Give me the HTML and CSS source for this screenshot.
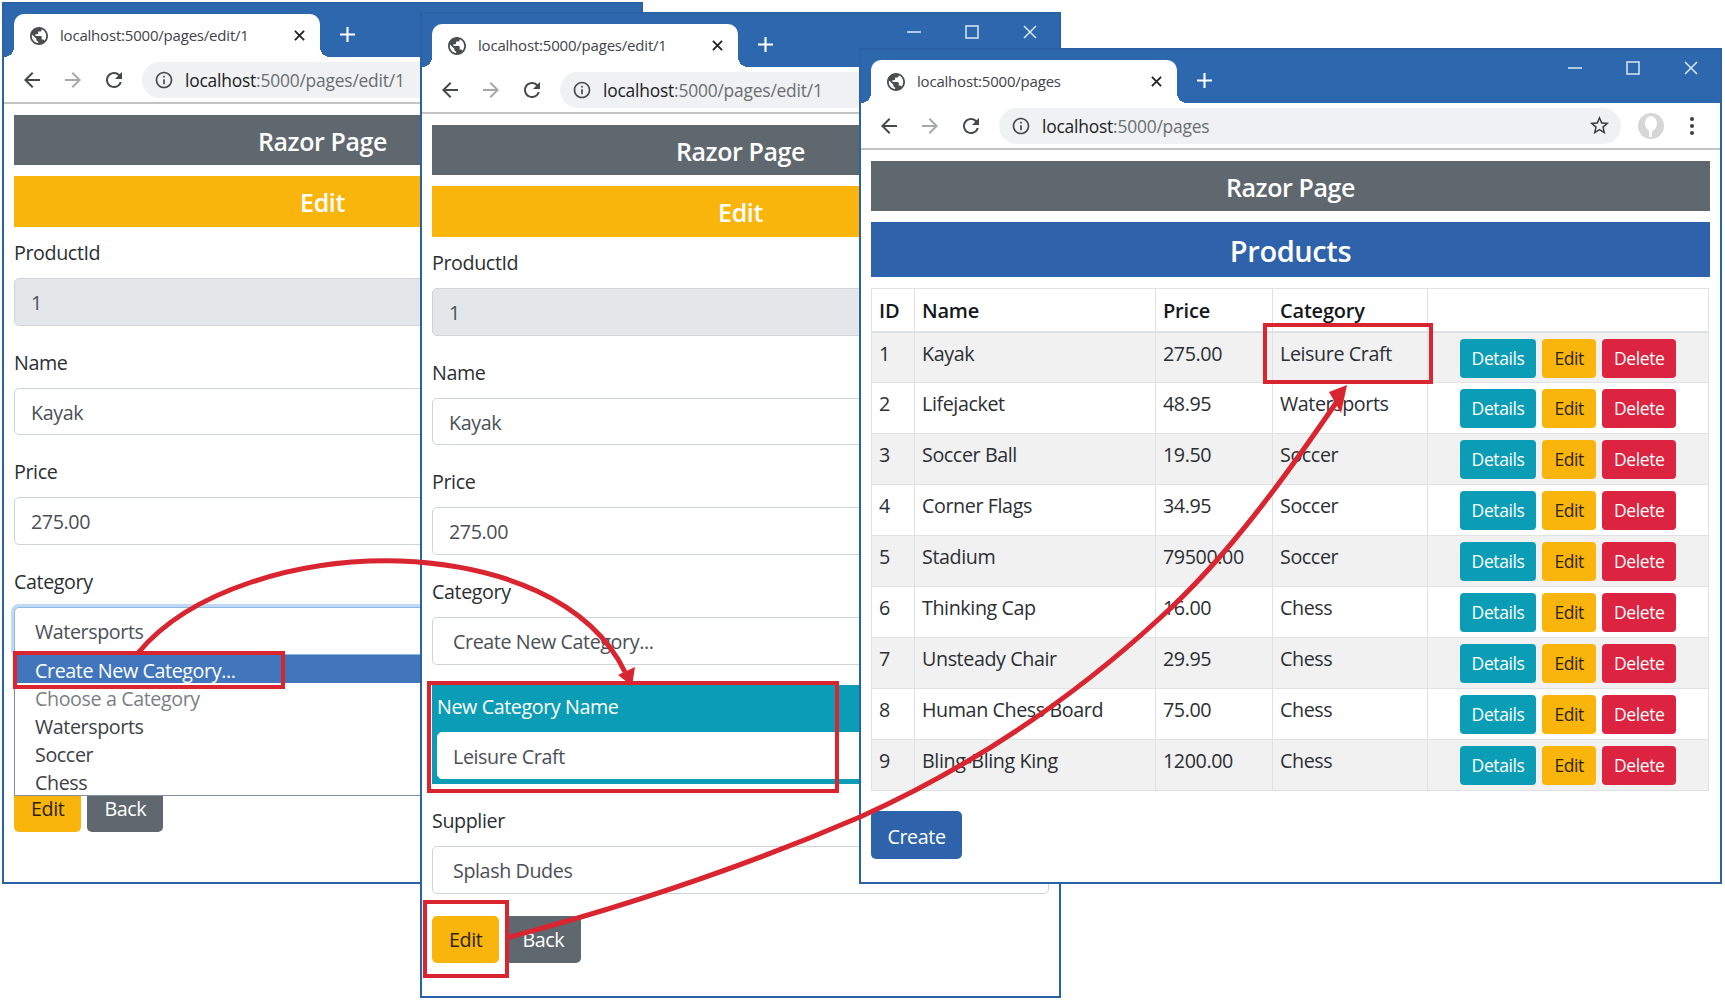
FILE: index.html
```html
<!DOCTYPE html>
<html lang="en">

<head>
    <meta charset="UTF-8">
    <title>Razor Page</title>
    <link rel="stylesheet" href="styles.css">
</head>

<body>

    <svg class="icon-defs" width="0" height="0">
        <symbol id="i-globe" viewBox="2 2 20 20"><path d="M12 2C6.48 2 2 6.48 2 12s4.48 10 10 10 10-4.48 10-10S17.52 2 12 2zm-1 17.93c-3.95-.49-7-3.85-7-7.93 0-.62.08-1.21.21-1.79L9 15v1c0 1.1.9 2 2 2v1.93zm6.9-2.54c-.26-.81-1-1.39-1.9-1.39h-1v-3c0-.55-.45-1-1-1H8v-2h2c.55 0 1-.45 1-1V7h2c1.1 0 2-.9 2-2v-.41c2.93 1.19 5 4.06 5 7.41 0 2.08-.8 3.97-2.1 5.39z"/></symbol>
        <symbol id="i-back" viewBox="0 0 24 24"><path d="M20 11H7.83l5.59-5.59L12 4l-8 8 8 8 1.41-1.41L7.83 13H20v-2z"/></symbol>
        <symbol id="i-forward" viewBox="0 0 24 24"><path d="M12 4l-1.41 1.41L16.17 11H4v2h12.17l-5.58 5.59L12 20l8-8z"/></symbol>
        <symbol id="i-reload" viewBox="0 0 24 24"><path d="M17.65 6.35A7.958 7.958 0 0 0 12 4c-4.42 0-7.99 3.58-7.99 8s3.57 8 7.99 8c3.73 0 6.84-2.55 7.73-6h-2.08A5.99 5.99 0 0 1 12 18c-3.31 0-6-2.69-6-6s2.69-6 6-6c1.66 0 3.14.69 4.22 1.78L13 11h7V4l-2.35 2.35z"/></symbol>
        <symbol id="i-info" viewBox="0 0 24 24"><path d="M11 7h2v2h-2zm0 4h2v6h-2zm1-9C6.48 2 2 6.48 2 12s4.48 10 10 10 10-4.48 10-10S17.52 2 12 2zm0 18c-4.41 0-8-3.59-8-8s3.59-8 8-8 8 3.59 8 8-3.59 8-8 8z"/></symbol>
        <symbol id="i-star" viewBox="0 0 24 24"><path d="M22 9.24l-7.19-.62L12 2 9.19 8.63 2 9.24l5.46 4.73L5.82 21 12 17.27 18.18 21l-1.63-7.03L22 9.24zM12 15.4l-3.76 2.27 1-4.28-3.32-2.88 4.38-.38L12 6.1l1.71 4.04 4.38.38-3.32 2.88 1 4.28L12 15.4z"/></symbol>
        <symbol id="i-close" viewBox="0 0 12 12"><path d="M1 1l10 10M11 1L1 11" fill="none" stroke="currentColor" stroke-width="2"/></symbol>
        <symbol id="i-plus" viewBox="0 0 14 14"><path d="M7 0v14M0 7h14" fill="none" stroke="currentColor" stroke-width="2"/></symbol>
        <symbol id="i-min" viewBox="0 0 14 14"><path d="M0 7h14" fill="none" stroke="currentColor" stroke-width="1.5"/></symbol>
        <symbol id="i-max" viewBox="0 0 14 14"><rect x="1" y="1" width="12" height="12" fill="none" stroke="currentColor" stroke-width="1.5"/></symbol>
        <symbol id="i-x" viewBox="0 0 14 14"><path d="M1 1l12 12M13 1L1 13" fill="none" stroke="currentColor" stroke-width="1.5"/></symbol>
    </svg>

    <!-- first window: edit form with the category list open -->
    <div class="window window-one">
        <div class="tabstrip">
            <div class="tab">
                <svg class="tab-globe"><use href="#i-globe"/></svg>
                <span class="tab-title">localhost:5000/pages/edit/1</span>
                <svg class="tab-close"><use href="#i-close"/></svg>
            </div>
            <svg class="new-tab"><use href="#i-plus"/></svg>
        </div>
        <div class="toolbar">
            <svg class="nav-icon"><use href="#i-back"/></svg>
            <svg class="nav-icon muted"><use href="#i-forward"/></svg>
            <svg class="nav-icon"><use href="#i-reload"/></svg>
            <div class="address">
                <svg class="info-icon"><use href="#i-info"/></svg>
                <span class="host">localhost</span><span class="path">:5000/pages/edit/1</span>
            </div>
        </div>
        <div class="content">
            <h4 class="bar bar-dark">Razor Page</h4>
            <h4 class="bar bar-warning">Edit</h4>
            <div class="group">
                <label>ProductId</label>
                <div class="field field-readonly">1</div>
            </div>
            <div class="group">
                <label>Name</label>
                <div class="field">Kayak</div>
            </div>
            <div class="group">
                <label>Price</label>
                <div class="field">275.00</div>
            </div>
            <div class="group group-last">
                <label>Category</label>
                <div class="select-wrap">
                    <div class="field field-select field-focus">Watersports</div>
                    <ul class="menu">
                        <li class="menu-active">Create New Category...</li>
                        <li class="menu-muted">Choose a Category</li>
                        <li>Watersports</li>
                        <li>Soccer</li>
                        <li>Chess</li>
                    </ul>
                </div>
            </div>
            <div class="actions actions-under-menu">
                <button class="btn btn-warning">Edit</button>
                <button class="btn btn-secondary">Back</button>
            </div>
        </div>
    </div>

    <!-- second window: new category section showing -->
    <div class="window window-two">
        <div class="tabstrip">
            <div class="tab">
                <svg class="tab-globe"><use href="#i-globe"/></svg>
                <span class="tab-title">localhost:5000/pages/edit/1</span>
                <svg class="tab-close"><use href="#i-close"/></svg>
            </div>
            <svg class="new-tab"><use href="#i-plus"/></svg>
            <div class="win-controls">
                <span><svg><use href="#i-min"/></svg></span>
                <span><svg><use href="#i-max"/></svg></span>
                <span><svg><use href="#i-x"/></svg></span>
            </div>
        </div>
        <div class="toolbar">
            <svg class="nav-icon"><use href="#i-back"/></svg>
            <svg class="nav-icon muted"><use href="#i-forward"/></svg>
            <svg class="nav-icon"><use href="#i-reload"/></svg>
            <div class="address">
                <svg class="info-icon"><use href="#i-info"/></svg>
                <span class="host">localhost</span><span class="path">:5000/pages/edit/1</span>
            </div>
        </div>
        <div class="content">
            <h4 class="bar bar-dark">Razor Page</h4>
            <h4 class="bar bar-warning">Edit</h4>
            <div class="group">
                <label>ProductId</label>
                <div class="field field-readonly">1</div>
            </div>
            <div class="group">
                <label>Name</label>
                <div class="field">Kayak</div>
            </div>
            <div class="group">
                <label>Price</label>
                <div class="field">275.00</div>
            </div>
            <div class="group group-tight">
                <label>Category</label>
                <div class="field field-select">Create New Category...</div>
            </div>
            <div class="new-category">
                <label>New Category Name</label>
                <div class="field field-inset">Leisure Craft</div>
            </div>
            <div class="group">
                <label>Supplier</label>
                <div class="field field-select">Splash Dudes</div>
            </div>
            <div class="actions">
                <button class="btn btn-warning">Edit</button>
                <button class="btn btn-secondary">Back</button>
            </div>
        </div>
    </div>

    <!-- third window: product list -->
    <div class="window window-three">
        <div class="tabstrip">
            <div class="tab">
                <svg class="tab-globe"><use href="#i-globe"/></svg>
                <span class="tab-title">localhost:5000/pages</span>
                <svg class="tab-close"><use href="#i-close"/></svg>
            </div>
            <svg class="new-tab"><use href="#i-plus"/></svg>
            <div class="win-controls">
                <span><svg><use href="#i-min"/></svg></span>
                <span><svg><use href="#i-max"/></svg></span>
                <span><svg><use href="#i-x"/></svg></span>
            </div>
        </div>
        <div class="toolbar">
            <svg class="nav-icon"><use href="#i-back"/></svg>
            <svg class="nav-icon muted"><use href="#i-forward"/></svg>
            <svg class="nav-icon"><use href="#i-reload"/></svg>
            <div class="address address-short">
                <svg class="info-icon"><use href="#i-info"/></svg>
                <span class="host">localhost</span><span class="path">:5000/pages</span>
                <svg class="star-icon"><use href="#i-star"/></svg>
            </div>
            <svg class="avatar" viewBox="0 0 26 26">
                <circle cx="13" cy="13" r="13" fill="#d6d6d6"/>
                <ellipse cx="13" cy="10.5" rx="6" ry="7.5" fill="#fff"/>
                <path d="M11 16h3v8h-3z" fill="#fff"/>
            </svg>
            <div class="kebab"><i></i><i></i><i></i></div>
        </div>
        <div class="content">
            <h4 class="bar bar-dark">Razor Page</h4>
            <h3 class="bar bar-primary">Products</h3>
            <table class="products">
                <colgroup>
                    <col class="col-id"><col class="col-name"><col class="col-price"><col class="col-cat"><col>
                </colgroup>
                <thead>
                    <tr><th>ID</th><th>Name</th><th>Price</th><th>Category</th><th></th></tr>
                </thead>
                <tbody>
                    <tr><td>1</td><td>Kayak</td><td>275.00</td><td>Leisure Craft</td><td class="row-actions"><div><a class="btn-sm btn-info">Details</a><a class="btn-sm btn-warning">Edit</a><a class="btn-sm btn-danger">Delete</a></div></td></tr>
                    <tr><td>2</td><td>Lifejacket</td><td>48.95</td><td>Watersports</td><td class="row-actions"><div><a class="btn-sm btn-info">Details</a><a class="btn-sm btn-warning">Edit</a><a class="btn-sm btn-danger">Delete</a></div></td></tr>
                    <tr><td>3</td><td>Soccer Ball</td><td>19.50</td><td>Soccer</td><td class="row-actions"><div><a class="btn-sm btn-info">Details</a><a class="btn-sm btn-warning">Edit</a><a class="btn-sm btn-danger">Delete</a></div></td></tr>
                    <tr><td>4</td><td>Corner Flags</td><td>34.95</td><td>Soccer</td><td class="row-actions"><div><a class="btn-sm btn-info">Details</a><a class="btn-sm btn-warning">Edit</a><a class="btn-sm btn-danger">Delete</a></div></td></tr>
                    <tr><td>5</td><td>Stadium</td><td>79500.00</td><td>Soccer</td><td class="row-actions"><div><a class="btn-sm btn-info">Details</a><a class="btn-sm btn-warning">Edit</a><a class="btn-sm btn-danger">Delete</a></div></td></tr>
                    <tr><td>6</td><td>Thinking Cap</td><td>16.00</td><td>Chess</td><td class="row-actions"><div><a class="btn-sm btn-info">Details</a><a class="btn-sm btn-warning">Edit</a><a class="btn-sm btn-danger">Delete</a></div></td></tr>
                    <tr><td>7</td><td>Unsteady Chair</td><td>29.95</td><td>Chess</td><td class="row-actions"><div><a class="btn-sm btn-info">Details</a><a class="btn-sm btn-warning">Edit</a><a class="btn-sm btn-danger">Delete</a></div></td></tr>
                    <tr><td>8</td><td>Human Chess Board</td><td>75.00</td><td>Chess</td><td class="row-actions"><div><a class="btn-sm btn-info">Details</a><a class="btn-sm btn-warning">Edit</a><a class="btn-sm btn-danger">Delete</a></div></td></tr>
                    <tr><td>9</td><td>Bling-Bling King</td><td>1200.00</td><td>Chess</td><td class="row-actions"><div><a class="btn-sm btn-info">Details</a><a class="btn-sm btn-warning">Edit</a><a class="btn-sm btn-danger">Delete</a></div></td></tr>
                </tbody>
            </table>
            <button class="btn btn-primary btn-create">Create</button>
        </div>
    </div>

    <!-- red callouts and arrows over the windows -->
    <svg class="annotations" viewBox="0 0 1725 1001">
        <rect x="15" y="653" width="268" height="34"/>
        <rect x="429" y="683" width="408" height="108"/>
        <rect x="425" y="902" width="82" height="74"/>
        <rect x="1265" y="325" width="166" height="57"/>
        <path d="M138 653C190 590 300 558 400 561C500 565 590 600 625 672"/>
        <polygon points="618,675 635,667 632,686"/>
        <path d="M506 938C650 900 760 860 860 817C960 772 1060 710 1160 618C1230 555 1290 470 1338 400"/>
        <polygon points="1329,392 1347,385 1341,413"/>
    </svg>

</body>
</html>
```

FILE: styles.css
```css
* {
    padding: 0;
    margin: 0;
    box-sizing: border-box;
    list-style: none;
}

html,
body {
    width: 1725px;
    height: 1001px;
    overflow: hidden;
    background-color: #fff;
}

body {
    position: relative;
    font-family: "Open Sans", "Noto Sans", sans-serif;
    font-size: 19.7px;
    letter-spacing: -0.4px;
    line-height: 30px;
    color: #2b2f33;
}

.icon-defs {
    position: absolute;
}

/* browser windows, placed on the desktop */
.window {
    position: absolute;
    border: 2px solid #2b62a6;
    background-color: #fff;
    overflow: hidden;
}

.window-one {
    left: 2px;
    top: 2px;
    width: 641px;
    height: 882px;
}

.window-two {
    left: 420px;
    top: 12px;
    width: 641px;
    height: 986px;
}

.window-three {
    left: 859px;
    top: 48px;
    width: 863px;
    height: 836px;
}

/* tab strip */
.tabstrip {
    display: flex;
    align-items: flex-start;
    height: 53px;
    padding: 10px 0 0 10px;
    background-color: #2d68ae;
}

.tab {
    position: relative;
    display: flex;
    align-items: center;
    flex: none;
    width: 306px;
    height: 43px;
    padding: 0 16px;
    border-radius: 10px 10px 0 0;
    background-color: #fff;
}

.tab::before,
.tab::after {
    content: "";
    position: absolute;
    bottom: 0;
    width: 10px;
    height: 10px;
}

.tab::before {
    left: -10px;
    background: radial-gradient(circle at 0 0, transparent 10px, #fff 10px);
}

.tab::after {
    right: -10px;
    background: radial-gradient(circle at 100% 0, transparent 10px, #fff 10px);
}

.tab-globe {
    flex: none;
    width: 18px;
    height: 18px;
    margin-right: 12px;
    fill: #4a4d50;
}

.tab-title {
    flex: 1;
    margin-top: -2px;
    font-size: 15px;
    letter-spacing: -0.2px;
    color: #40444a;
    white-space: nowrap;
}

.tab-close {
    flex: none;
    width: 11px;
    height: 11px;
    margin-right: -1px;
    color: #222;
}

.new-tab {
    flex: none;
    width: 15px;
    height: 15px;
    margin: 13px 0 0 20px;
    color: #fff;
}

.win-controls {
    display: flex;
    margin: -10px 0 0 auto;
    color: #dbe8f7;
}

.win-controls span {
    display: flex;
    align-items: center;
    justify-content: center;
    width: 58px;
    height: 36px;
}

.win-controls svg {
    width: 14px;
    height: 14px;
}

/* address bar row */
.toolbar {
    display: flex;
    align-items: center;
    height: 47px;
    padding-left: 16px;
    border-bottom: 2px solid #c4c4c4;
}

.nav-icon {
    flex: none;
    width: 24px;
    height: 24px;
    margin-right: 17px;
    fill: #45494d;
}

.nav-icon.muted {
    fill: #a6a8ab;
}

.address {
    display: flex;
    align-items: center;
    flex: none;
    width: 900px;
    height: 36px;
    margin-left: -1px;
    padding-left: 12px;
    border-radius: 18px;
    background-color: #f0f1f2;
    font-size: 17.4px;
    letter-spacing: -0.2px;
    white-space: nowrap;
}

.address-short {
    width: 622px;
}

.info-icon {
    flex: none;
    width: 20px;
    height: 20px;
    margin-right: 11px;
    fill: #45494d;
}

.host {
    color: #202225;
}

.path {
    color: #6a6e72;
}

.star-icon {
    flex: none;
    width: 23px;
    height: 23px;
    margin-left: auto;
    margin-right: 10px;
    fill: #3c3f42;
}

.avatar {
    flex: none;
    width: 26px;
    height: 26px;
    margin-left: 17px;
}

.kebab {
    display: flex;
    flex-direction: column;
    gap: 3px;
    margin-left: 26px;
}

.kebab i {
    display: block;
    width: 4px;
    height: 4px;
    border-radius: 50%;
    background-color: #3c3f42;
}

/* page body */
.content {
    padding: 11px 10px 0;
}

.bar {
    height: 50px;
    margin-bottom: 11px;
    font-size: 25px;
    font-weight: 600;
    line-height: 52px;
    text-align: center;
    color: #fff;
}

.bar-dark {
    background-color: #5f686f;
}

.bar-warning {
    height: 51px;
    background-color: #f9b50b;
}

.bar-primary {
    height: 55px;
    font-size: 29px;
    line-height: 57px;
    background-color: #2e62ab;
}

label {
    display: block;
    margin-bottom: 10px;
}

.group {
    margin-bottom: 22.2px;
}

.group-tight {
    margin-bottom: 20.5px;
}

.group-last {
    margin-bottom: 0;
}

.field {
    height: 47.5px;
    padding: 0 16px;
    border: 1px solid #ced4da;
    border-radius: 5px;
    background-color: #fff;
    line-height: 48px;
    color: #4a5056;
}

.field-readonly {
    background-color: #e4e7ea;
}

.field-select {
    padding-left: 20px;
}

.field-focus {
    border-color: #8db8ea;
    box-shadow: 0 0 0 3px #c3d9f3;
}

.select-wrap {
    position: relative;
}

.menu {
    position: absolute;
    left: 0;
    right: 0;
    top: 48px;
    height: 141px;
    border: 1px solid #7f8f9f;
    border-top: 0;
    background-color: #fff;
    line-height: 32px;
}

.menu li {
    height: 28px;
    padding-left: 20px;
    color: #3c4146;
}

.menu .menu-active {
    background-color: #4176bd;
    color: #fff;
}

.menu .menu-muted {
    color: #7a7f84;
}

.new-category {
    margin-bottom: 22px;
    padding: 7px 0 5px 5px;
    background-color: #0b9db5;
    color: #fff;
}

.field-inset {
    height: 47px;
    padding-left: 15px;
    border-color: #fff;
}

.actions {
    display: flex;
    gap: 6px;
}

.actions-under-menu {
    margin-top: 130px;
}

.btn {
    height: 47px;
    padding: 2px 17px 0;
    border: 0;
    border-radius: 5px;
    font: inherit;
    letter-spacing: inherit;
}

.btn-warning {
    background-color: #f9b50b;
    color: #2c2410;
}

.btn-secondary {
    background-color: #5f686f;
    color: #fff;
}

.btn-primary {
    background-color: #2e62ab;
    color: #fff;
}

.btn-create {
    width: 91px;
    height: 48px;
    margin-top: 20px;
    padding: 3px 0 0;
}

/* products table */
.products {
    width: 838px;
    border-collapse: collapse;
    table-layout: fixed;
}

.col-id {
    width: 43px;
}

.col-name {
    width: 241px;
}

.col-price {
    width: 117px;
}

.col-cat {
    width: 155px;
}

.products th,
.products td {
    padding: 6px 7px 4px;
    border: 1px solid #dfe2e5;
    text-align: left;
    vertical-align: top;
    white-space: nowrap;
}

.products th {
    height: 43px;
    padding-top: 7px;
    border-bottom-width: 2px;
    font-size: 20px;
    font-weight: 600;
    letter-spacing: -0.2px;
    color: #15181b;
}

.products td {
    height: 51px;
}

.products tbody tr:nth-child(odd) {
    background-color: #f1f1f2;
}

.row-actions div {
    display: flex;
    justify-content: center;
    gap: 6px;
}

.btn-sm {
    display: block;
    height: 39px;
    padding: 0 12px;
    border-radius: 4px;
    font-size: 17.5px;
    line-height: 39px;
}

.btn-info {
    background-color: #0b9db5;
    color: #fff;
}

.btn-danger {
    background-color: #dc2440;
    color: #fff;
}

/* callouts */
.annotations {
    position: absolute;
    left: 0;
    top: 0;
    width: 1725px;
    height: 1001px;
    pointer-events: none;
}

.annotations rect,
.annotations path {
    fill: none;
    stroke: #d9252f;
    stroke-width: 4;
}

.annotations path {
    stroke-width: 5;
}

.annotations polygon {
    fill: #d9252f;
}
```
